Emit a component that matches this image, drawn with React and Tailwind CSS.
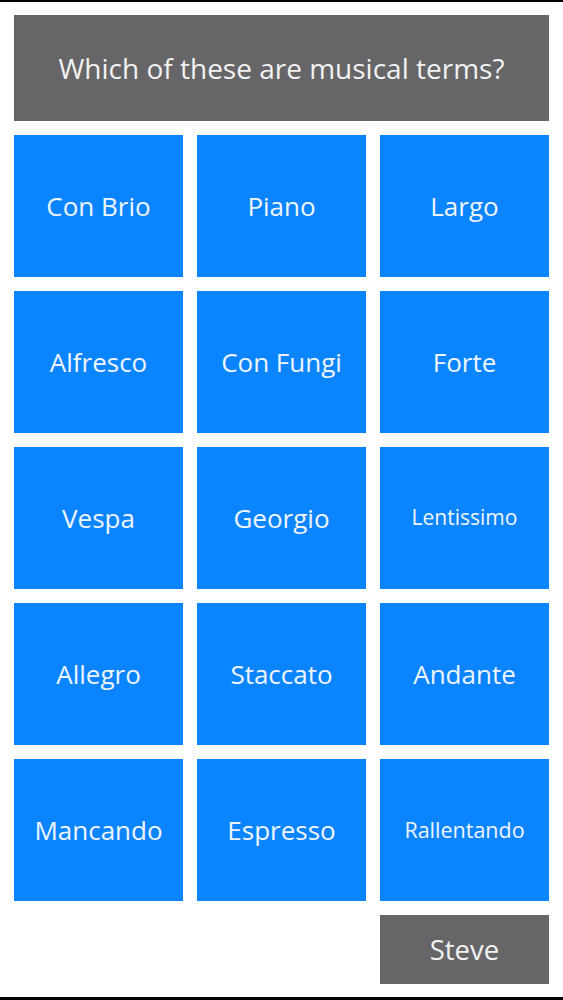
import React from "react";

const items = [
  ["Con Brio", ""],
  ["Piano", ""],
  ["Largo", ""],
  ["Alfresco", ""],
  ["Con Fungi", ""],
  ["Forte", ""],
  ["Vespa", ""],
  ["Georgio", ""],
  ["Lentissimo", "a"],
  ["Allegro", ""],
  ["Staccato", ""],
  ["Andante", ""],
  ["Mancando", ""],
  ["Espresso", ""],
  ["Rallentando", "b"],
];

const sizes = {
  "": "text-[26px]",
  a: "text-[21px]",
  b: "text-[21.5px]",
};

export default function App() {
  return (
    <div
      className="w-[563px] h-[1000px] bg-white border-t-2 border-b-[3px] border-black px-[14px] pt-[13px] box-border flex flex-col"
      style={{ fontFamily: '"Open Sans", "Noto Sans", sans-serif' }}
    >
      <div className="h-[106px] bg-[#666567] flex items-center justify-center text-[28px] text-[#f2f2f2]">
        Which of these are musical terms?
      </div>
      <div className="mt-[14px] grid grid-cols-3 gap-[14px]">
        {items.map(([label, s]) => (
          <div
            key={label}
            className={
              "h-[142px] bg-[#0a84ff] flex items-center justify-center text-[#eef5ff] " +
              sizes[s]
            }
          >
            {label}
          </div>
        ))}
      </div>
      <div className="mt-[14px] grid grid-cols-3 gap-[14px]">
        <div className="col-start-3 h-[69px] bg-[#666567] flex items-center justify-center text-[27.5px] text-[#f2f2f2]">
          Steve
        </div>
      </div>
    </div>
  );
}
